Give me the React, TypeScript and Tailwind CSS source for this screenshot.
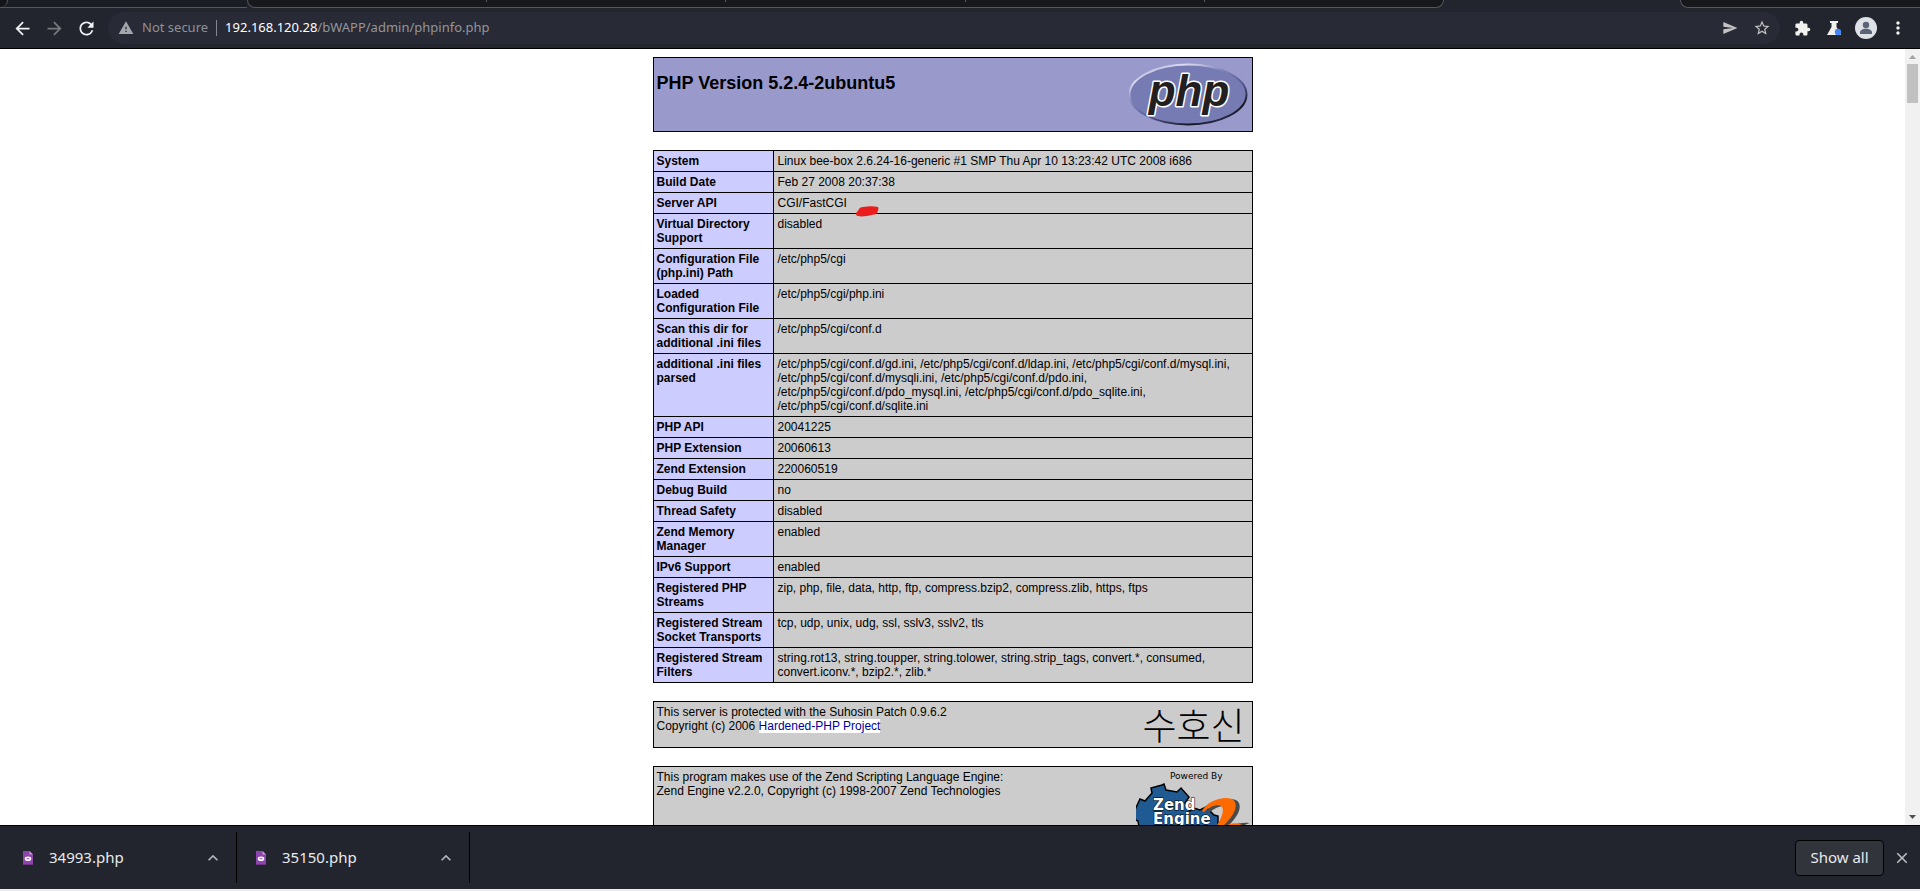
import type { ReactNode } from "react";
import {
  MdArrowBack,
  MdArrowForward,
  MdClose,
  MdExpandLess,
  MdExtension,
  MdMoreVert,
  MdRefresh,
  MdSend,
  MdStarBorder,
  MdWarning,
} from "react-icons/md";

const uiFont = "font-['Noto_Sans',sans-serif]";
const pageFont = "font-['Liberation_Sans',sans-serif]";

function RedMark() {
  return (
    <svg className="absolute top-[10px] left-full ml-[8px] h-[11px] w-[26px]" viewBox="0 0 26 11" aria-hidden="true">
      <path d="M2 6C4 4 4 1 8 1c6-1 11-1 15 0 1 1 0 4-1 6-1 2-3 1-5 2-5 1-10 2-14 1C0 9 0 7 2 6Z" fill="#ea1c1c" />
    </svg>
  );
}

const rows: { name: string; value: string; marked?: boolean }[] = [
  { name: "System", value: "Linux bee-box 2.6.24-16-generic #1 SMP Thu Apr 10 13:23:42 UTC 2008 i686" },
  { name: "Build Date", value: "Feb 27 2008 20:37:38" },
  { name: "Server API", value: "CGI/FastCGI", marked: true },
  { name: "Virtual Directory Support", value: "disabled" },
  { name: "Configuration File (php.ini) Path", value: "/etc/php5/cgi" },
  { name: "Loaded Configuration File", value: "/etc/php5/cgi/php.ini" },
  { name: "Scan this dir for additional .ini files", value: "/etc/php5/cgi/conf.d" },
  {
    name: "additional .ini files parsed",
    value:
      "/etc/php5/cgi/conf.d/gd.ini, /etc/php5/cgi/conf.d/ldap.ini, /etc/php5/cgi/conf.d/mysql.ini, /etc/php5/cgi/conf.d/mysqli.ini, /etc/php5/cgi/conf.d/pdo.ini, /etc/php5/cgi/conf.d/pdo_mysql.ini, /etc/php5/cgi/conf.d/pdo_sqlite.ini, /etc/php5/cgi/conf.d/sqlite.ini",
  },
  { name: "PHP API", value: "20041225" },
  { name: "PHP Extension", value: "20060613" },
  { name: "Zend Extension", value: "220060519" },
  { name: "Debug Build", value: "no" },
  { name: "Thread Safety", value: "disabled" },
  { name: "Zend Memory Manager", value: "enabled" },
  { name: "IPv6 Support", value: "enabled" },
  { name: "Registered PHP Streams", value: "zip, php, file, data, http, ftp, compress.bzip2, compress.zlib, https, ftps" },
  { name: "Registered Stream Socket Transports", value: "tcp, udp, unix, udg, ssl, sslv3, sslv2, tls" },
  {
    name: "Registered Stream Filters",
    value: "string.rot13, string.toupper, string.tolower, string.strip_tags, convert.*, consumed, convert.iconv.*, bzip2.*, zlib.*",
  },
];

function TabStrip() {
  return (
    <div className="flex h-2 shrink-0 items-stretch overflow-hidden bg-[#22252e]">
      <div className="flex w-[247px] border-b border-[#55575e] bg-[#1b1d25]">
        <div className="w-2 rounded-br-lg border-r border-[#55575e] bg-[#141519]" />
      </div>
      <div className="flex flex-[1197] justify-evenly rounded-b-lg border-x border-b border-[#55575e] bg-[#17181c]">
        <span className="h-[2px] w-px bg-[#55575e]" />
        <span className="h-[2px] w-px bg-[#55575e]" />
        <span className="h-[2px] w-px bg-[#55575e]" />
        <span className="h-[2px] w-px bg-[#55575e]" />
      </div>
      <div className="flex-[237]" />
      <div className="flex-[239] rounded-bl-lg border-b border-l border-[#55575e] bg-[#17181c]" />
    </div>
  );
}

function ToolButton({ label, className, children }: { label: string; className?: string; children: ReactNode }) {
  return (
    <button type="button" aria-label={label} className={`flex h-6 items-center justify-center ${className ?? ""}`}>
      {children}
    </button>
  );
}

function Toolbar() {
  return (
    <div className={`flex h-[41px] shrink-0 items-center border-b border-black bg-[#22252e] pr-[10px] pl-[10px] ${uiFont}`}>
      <div className="flex items-center gap-2 text-[#f1f3f4]">
        <ToolButton label="Back" className="w-6">
          <MdArrowBack size={21} />
        </ToolButton>
        <ToolButton label="Forward" className="w-6 text-[#77797e]">
          <MdArrowForward size={21} />
        </ToolButton>
        <ToolButton label="Reload" className="w-6">
          <MdRefresh size={21} />
        </ToolButton>
      </div>
      <div className="ml-[10px] flex h-8 flex-1 items-center rounded-full bg-[#282a35] pr-[6px] pl-[10px]">
        <MdWarning size={16} className="shrink-0 text-[#a3a6ab]" />
        <span className="ml-2 text-[13px] text-[#8f9196]">Not secure</span>
        <span className="mx-2 h-4 w-px bg-[#85878c]" />
        <p className="flex-1 text-[13px] text-[#94969b]">
          <span className="text-white">192.168.120.28</span>/bWAPP/admin/phpinfo.php
        </p>
        <div className="flex gap-2 text-[#c4c4c4]">
          <ToolButton label="Send this page" className="w-6">
            <MdSend size={16} />
          </ToolButton>
          <ToolButton label="Bookmark this page" className="w-6">
            <MdStarBorder size={18} />
          </ToolButton>
        </div>
      </div>
      <div className="ml-[10px] flex items-center gap-2 text-[#f1f1ee]">
        <ToolButton label="Extensions" className="w-6">
          <MdExtension size={17} />
        </ToolButton>
        <ToolButton label="Experiments" className="w-6">
          <svg className="h-4 w-4" viewBox="0 0 16 16" aria-hidden="true">
            <path d="M4 1h8v2h-1.500v4L15 15H1l4.500-8V3H4Z" fill="currentColor" />
            <circle cx="12" cy="12" r="3.200" fill="#4285f4" />
          </svg>
        </ToolButton>
        <ToolButton label="Profile" className="w-6">
          <svg className="h-[22px] w-[22px]" viewBox="0 0 22 22" aria-hidden="true">
            <circle cx="11" cy="11" r="11" fill="#dee1e6" />
            <circle cx="11" cy="8" r="3.200" fill="#5a6377" />
            <path d="M5 17v-1.500c0-2.300 3-3.700 6-3.700s6 1.400 6 3.700V17Z" fill="#5a6377" />
          </svg>
        </ToolButton>
        <ToolButton label="Menu" className="w-6">
          <MdMoreVert size={20} />
        </ToolButton>
      </div>
    </div>
  );
}

function PhpLogo() {
  return (
    <svg className="h-[67px] w-[120px] shrink-0" viewBox="0 0 120 67" role="img" aria-label="PHP logo">
      <defs>
        <linearGradient id="rim" x1="0.150" y1="0" x2="0.850" y2="1">
          <stop offset="0" stopColor="#a7a9d4" />
          <stop offset="0.150" stopColor="#dcdcf0" />
          <stop offset="0.350" stopColor="#8488bb" />
          <stop offset="0.600" stopColor="#555a94" />
          <stop offset="0.850" stopColor="#15151f" />
          <stop offset="1" stopColor="#3c3f68" />
        </linearGradient>
      </defs>
      <ellipse cx="59" cy="33.500" rx="58.500" ry="30" fill="#777bb3" stroke="url(#rim)" strokeWidth="2" />
      <text
        x="60"
        y="45"
        textAnchor="middle"
        className="font-['Liberation_Sans',sans-serif] text-[44px] font-bold italic"
        fill="#231f20"
        stroke="#ffffff"
        strokeWidth="3"
        strokeLinejoin="round"
        paintOrder="stroke"
      >
        php
      </text>
    </svg>
  );
}

function ZendLogo() {
  return (
    <svg className="h-[89px] w-[113px] shrink-0" viewBox="0 0 113 89" role="img" aria-label="Powered by Zend Engine 2">
      <text x="34" y="9" className="font-['DejaVu_Sans',sans-serif] text-[9px]" fill="#000000">
        Powered By
      </text>
      <path
        d="M4 29l5 2 7-8-1-5 11-3 2-1 2 6 11 2 4-4 8 9-4 6 5 8 4-3 6 2 6-3 8 8 4 1 0 14-2 14-12 6-14 2-10 6-16 0-14-3-8-10-6-8 3-10-1-6-7-3Z"
        fill="#1f5a93"
        stroke="#000000"
        strokeWidth="1.500"
      />
      <g fill="#4a4a4a" transform="translate(4 1)">
        <path d="M66 42C70 33 81 28 90 28c9 0 11 5 9 12-3 8-10 14-15 19 6-4 14-8 26-7-12 4-18 10-26 20-6-2-12-2-18 2 6-8 14-16 18-24 3-6 4-12 1-14-4-2-10 1-15 5Z" />
      </g>
      <path
        d="M66 41C70 33 81 28 90 28c9 0 11 5 9 12-3 8-10 14-15 19 6-4 12-7 22-5-10 4-15 8-22 18-6-2-12-2-18 2 6-8 14-16 18-24 3-6 4-12 1-14-4-2-12 1-17 6Z"
        fill="#ff6a00"
      />
      <g
        className="font-['DejaVu_Sans',sans-serif] text-[15px] font-bold"
        stroke="#000000"
        strokeWidth="1"
        paintOrder="stroke"
        fill="#ffffff"
      >
        <text x="17" y="40">Zend</text>
        <text x="17" y="54">Engine</text>
      </g>
    </svg>
  );
}

function InfoBox({ className, children }: { className: string; children: ReactNode }) {
  return <section className={`flex items-start justify-between border border-black ${className}`}>{children}</section>;
}

function InfoPage() {
  return (
    <div className={`mx-auto flex max-w-[600px] flex-col gap-[18px] pt-2 text-[12px] leading-[14px] text-black ${pageFont}`}>
      <InfoBox className="bg-[#9999cc] p-[3px]">
        <h1 className="mt-3 text-[18px] leading-[21px] font-bold">PHP Version 5.2.4-2ubuntu5</h1>
        <PhpLogo />
      </InfoBox>

      <table className="w-full border-collapse">
        <tbody>
          {rows.map((row) => (
            <tr key={row.name}>
              <th scope="row" className="w-[120px] border border-black bg-[#ccccff] p-[3px] text-left align-top font-bold">
                {row.name}
              </th>
              <td className="border border-black bg-[#cccccc] py-[3px] pr-[3px] pl-1 align-top">
                {row.marked ? (
                  <span className="relative inline-block">
                    {row.value}
                    <RedMark />
                  </span>
                ) : (
                  row.value
                )}
              </td>
            </tr>
          ))}
        </tbody>
      </table>

      <InfoBox className="bg-[#cccccc] p-[3px]">
        <p>
          This server is protected with the Suhosin Patch 0.9.6.2
          <br />
          Copyright (c) 2006{" "}
          <a href="#hardened" className="bg-white text-[#000099]">
            Hardened-PHP Project
          </a>
        </p>
        <span lang="ko" className="pr-1 font-['Noto_Sans_CJK_KR',sans-serif] text-[37px] leading-[39px] font-light">
          수호신
        </span>
      </InfoBox>

      <InfoBox className="bg-[#cccccc] p-[3px]">
        <p>
          This program makes use of the Zend Scripting Language Engine:
          <br />
          Zend Engine v2.2.0, Copyright (c) 1998-2007 Zend Technologies
        </p>
        <ZendLogo />
      </InfoBox>
    </div>
  );
}

function Scrollbar() {
  return (
    <div className="flex w-[15px] shrink-0 flex-col items-center justify-between bg-[#f1f1f1]" aria-hidden="true">
      <div className="flex flex-col items-center">
        <svg className="h-[15px] w-[15px]" viewBox="0 0 15 15">
          <path d="M4 10h7L7.500 6Z" fill="#a3a3a3" />
        </svg>
        <div className="h-[39px] w-[11px] bg-[#c1c1c1]" />
      </div>
      <svg className="h-[15px] w-[15px]" viewBox="0 0 15 15">
        <path d="M4 5h7L7.500 9Z" fill="#505050" />
      </svg>
    </div>
  );
}

function Download({ name }: { name: string }) {
  return (
    <div className="flex h-[51px] w-[233px] items-center border-r border-black pr-[11px] pl-[19px]">
      <svg className="h-[14px] w-[10px]" viewBox="0 0 10 14" aria-hidden="true">
        <path d="M0 0h6.500L10 3.500V14H0Z" fill="#8e44ad" />
        <path d="M6.500 0 10 3.500H6.500Z" fill="#c79ad9" />
        <path d="M0 13h10v1H0Z" fill="#6c3483" />
        <ellipse cx="5" cy="7.800" rx="3.300" ry="2.300" fill="#ffffff" />
        <path d="M3.500 7.800h3" stroke="#8e44ad" strokeWidth="1" />
      </svg>
      <span className="ml-4 flex-1 text-[#e8eaed]">{name}</span>
      <button type="button" aria-label={`Options for ${name}`} className="flex h-6 w-6 items-center justify-center text-[#b4b6ba]">
        <MdExpandLess size={20} />
      </button>
    </div>
  );
}

function DownloadShelf() {
  return (
    <footer className={`flex h-16 shrink-0 items-center justify-between border-t border-black bg-[#22252e] pr-[9px] pl-1 text-[15px] ${uiFont}`}>
      <div className="flex items-center">
        <Download name="34993.php" />
        <Download name="35150.php" />
      </div>
      <div className="flex items-center gap-[9px]">
        <button type="button" className="h-9 w-[89px] rounded border border-black bg-[#31343b] text-[#e8eaed]">
          Show all
        </button>
        <button type="button" aria-label="Close" className="text-[#bfc1c4]">
          <MdClose size={18} />
        </button>
      </div>
    </footer>
  );
}

export default function App() {
  return (
    <div className="flex h-screen flex-col border-b-2 border-[#eeeeee] bg-white">
      <header>
        <TabStrip />
        <Toolbar />
      </header>
      <div className="flex min-h-0 flex-1">
        <main className="min-w-0 flex-1 overflow-hidden">
          <InfoPage />
        </main>
        <Scrollbar />
      </div>
      <DownloadShelf />
    </div>
  );
}
